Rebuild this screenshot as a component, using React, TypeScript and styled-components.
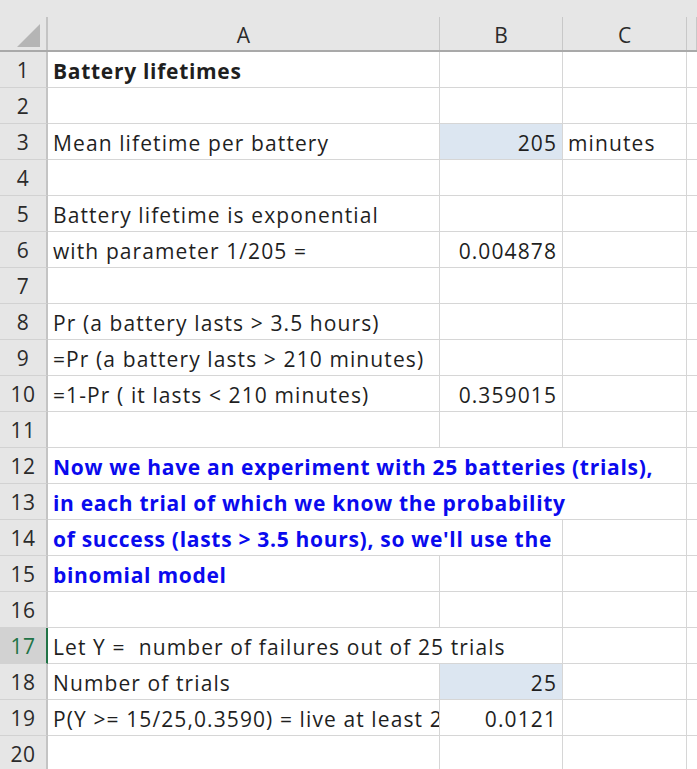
import React from "react";
import styled, { createGlobalStyle, css } from "styled-components";

const GlobalStyle = createGlobalStyle`
  html, body {
    margin: 0;
    padding: 0;
    background: #ffffff;
    overflow: hidden;
  }
  body {
    font-family: "Open Sans", Lato, sans-serif;
  }
`;

const COLUMNS = "48px 392px 123px 124px 1fr";

const Sheet = styled.div`
  width: 697px;
  height: 769px;
  overflow: hidden;
  background: #fff;
  color: #1f1f1f;
`;

const TopStrip = styled.div`
  height: 17px;
  background: #e6e6e6;
`;

const HeaderRow = styled.div`
  display: grid;
  grid-template-columns: ${COLUMNS};
  height: 35px;
  background: #e6e6e6;
  border-bottom: 2px solid #a9a9a9;
  box-sizing: border-box;
`;

const Corner = styled.div`
  position: relative;
  border-right: 2px solid #c4c4c4;
  box-sizing: border-box;
`;

const CornerTriangle = styled.div`
  position: absolute;
  right: 6px;
  bottom: 3px;
  width: 0;
  height: 0;
  border-style: solid;
  border-width: 0 0 23px 23px;
  border-color: transparent transparent #b5b5b5 transparent;
`;

const ColHead = styled.div`
  display: flex;
  align-items: center;
  justify-content: center;
  padding-top: 2px;
  font-size: 21px;
  color: #2b2b2b;
  border-right: 1px solid #c8c8c8;
  box-sizing: border-box;
`;

const Row = styled.div`
  display: grid;
  grid-template-columns: ${COLUMNS};
  height: 36px;
`;

const RowHead = styled.div<{ $active?: boolean }>`
  display: flex;
  align-items: center;
  justify-content: center;
  font-size: 21px;
  letter-spacing: 0.5px;
  color: #2b2b2b;
  background: #e6e6e6;
  border-right: 2px solid #c4c4c4;
  border-bottom: 1px solid #d2d2d2;
  box-sizing: border-box;
  ${(p) =>
    p.$active &&
    css`
      background: #d2d2d2;
      color: #217346;
      border-right-color: #217346;
    `}
`;

const Cell = styled.div<{
  $span?: number;
  $align?: "left" | "right";
  $bold?: boolean;
  $blue?: boolean;
  $fill?: boolean;
}>`
  grid-column: span ${(p) => p.$span ?? 1};
  display: flex;
  align-items: center;
  justify-content: ${(p) => (p.$align === "right" ? "flex-end" : "flex-start")};
  padding: 2px 5px 0 5px;
  font-size: 21px;
  letter-spacing: ${(p) => (p.$bold ? "0.7px" : "1.1px")};
  white-space: pre;
  overflow: hidden;
  border-right: 1px solid #d6d6d6;
  border-bottom: 1px solid #d6d6d6;
  box-sizing: border-box;
  font-weight: ${(p) => (p.$bold ? 700 : 400)};
  color: ${(p) => (p.$blue ? "#0a0aee" : "#1f1f1f")};
  background: ${(p) => (p.$fill ? "#dce6f1" : "#ffffff")};
`;

type CellData = {
  text?: string;
  span?: number;
  align?: "left" | "right";
  bold?: boolean;
  blue?: boolean;
  fill?: boolean;
};

// Each row lists its cells from column A onward; span stands in for text
// that runs over into empty neighbours.
const rows: CellData[][] = [
  [{ text: "Battery lifetimes", bold: true }, {}, {}, {}],
  [{}, {}, {}, {}],
  [
    { text: "Mean lifetime per battery" },
    { text: "205", align: "right", fill: true },
    { text: "minutes" },
    {},
  ],
  [{}, {}, {}, {}],
  [{ text: "Battery lifetime is exponential" }, {}, {}, {}],
  [{ text: "with parameter 1/205 =" }, { text: "0.004878", align: "right" }, {}, {}],
  [{}, {}, {}, {}],
  [{ text: "Pr (a battery lasts > 3.5 hours)" }, {}, {}, {}],
  [{ text: "=Pr (a battery lasts > 210 minutes)" }, {}, {}, {}],
  [{ text: "=1-Pr ( it lasts < 210 minutes)" }, { text: "0.359015", align: "right" }, {}, {}],
  [{}, {}, {}, {}],
  [
    { text: "Now we have an experiment with 25 batteries (trials),", span: 3, bold: true, blue: true },
    {},
  ],
  [
    { text: "in each trial of which we know the probability", span: 3, bold: true, blue: true },
    {},
  ],
  [
    { text: "of success (lasts > 3.5 hours), so we'll use the", span: 2, bold: true, blue: true },
    {},
    {},
  ],
  [{ text: "binomial model", bold: true, blue: true }, {}, {}, {}],
  [{}, {}, {}, {}],
  [{ text: "Let Y =  number of failures out of 25 trials", span: 2 }, {}, {}],
  [{ text: "Number of trials" }, { text: "25", align: "right", fill: true }, {}, {}],
  [
    { text: "P(Y >= 15/25,0.3590) = live at least 210 minutes" },
    { text: "0.0121", align: "right" },
    {},
    {},
  ],
  [{}, {}, {}, {}],
];

const ACTIVE_ROW = 17;

const App: React.FC = () => {
  return (
    <>
      <GlobalStyle />
      <Sheet>
        <TopStrip />
        <HeaderRow>
          <Corner>
            <CornerTriangle />
          </Corner>
          <ColHead>A</ColHead>
          <ColHead>B</ColHead>
          <ColHead>C</ColHead>
          <ColHead />
        </HeaderRow>
        {rows.map((cells, i) => (
          <Row key={i}>
            <RowHead $active={i + 1 === ACTIVE_ROW}>{i + 1}</RowHead>
            {cells.map((c, j) => (
              <Cell
                key={j}
                $span={c.span}
                $align={c.align}
                $bold={c.bold}
                $blue={c.blue}
                $fill={c.fill}
              >
                {c.text}
              </Cell>
            ))}
          </Row>
        ))}
      </Sheet>
    </>
  );
};

export default App;
